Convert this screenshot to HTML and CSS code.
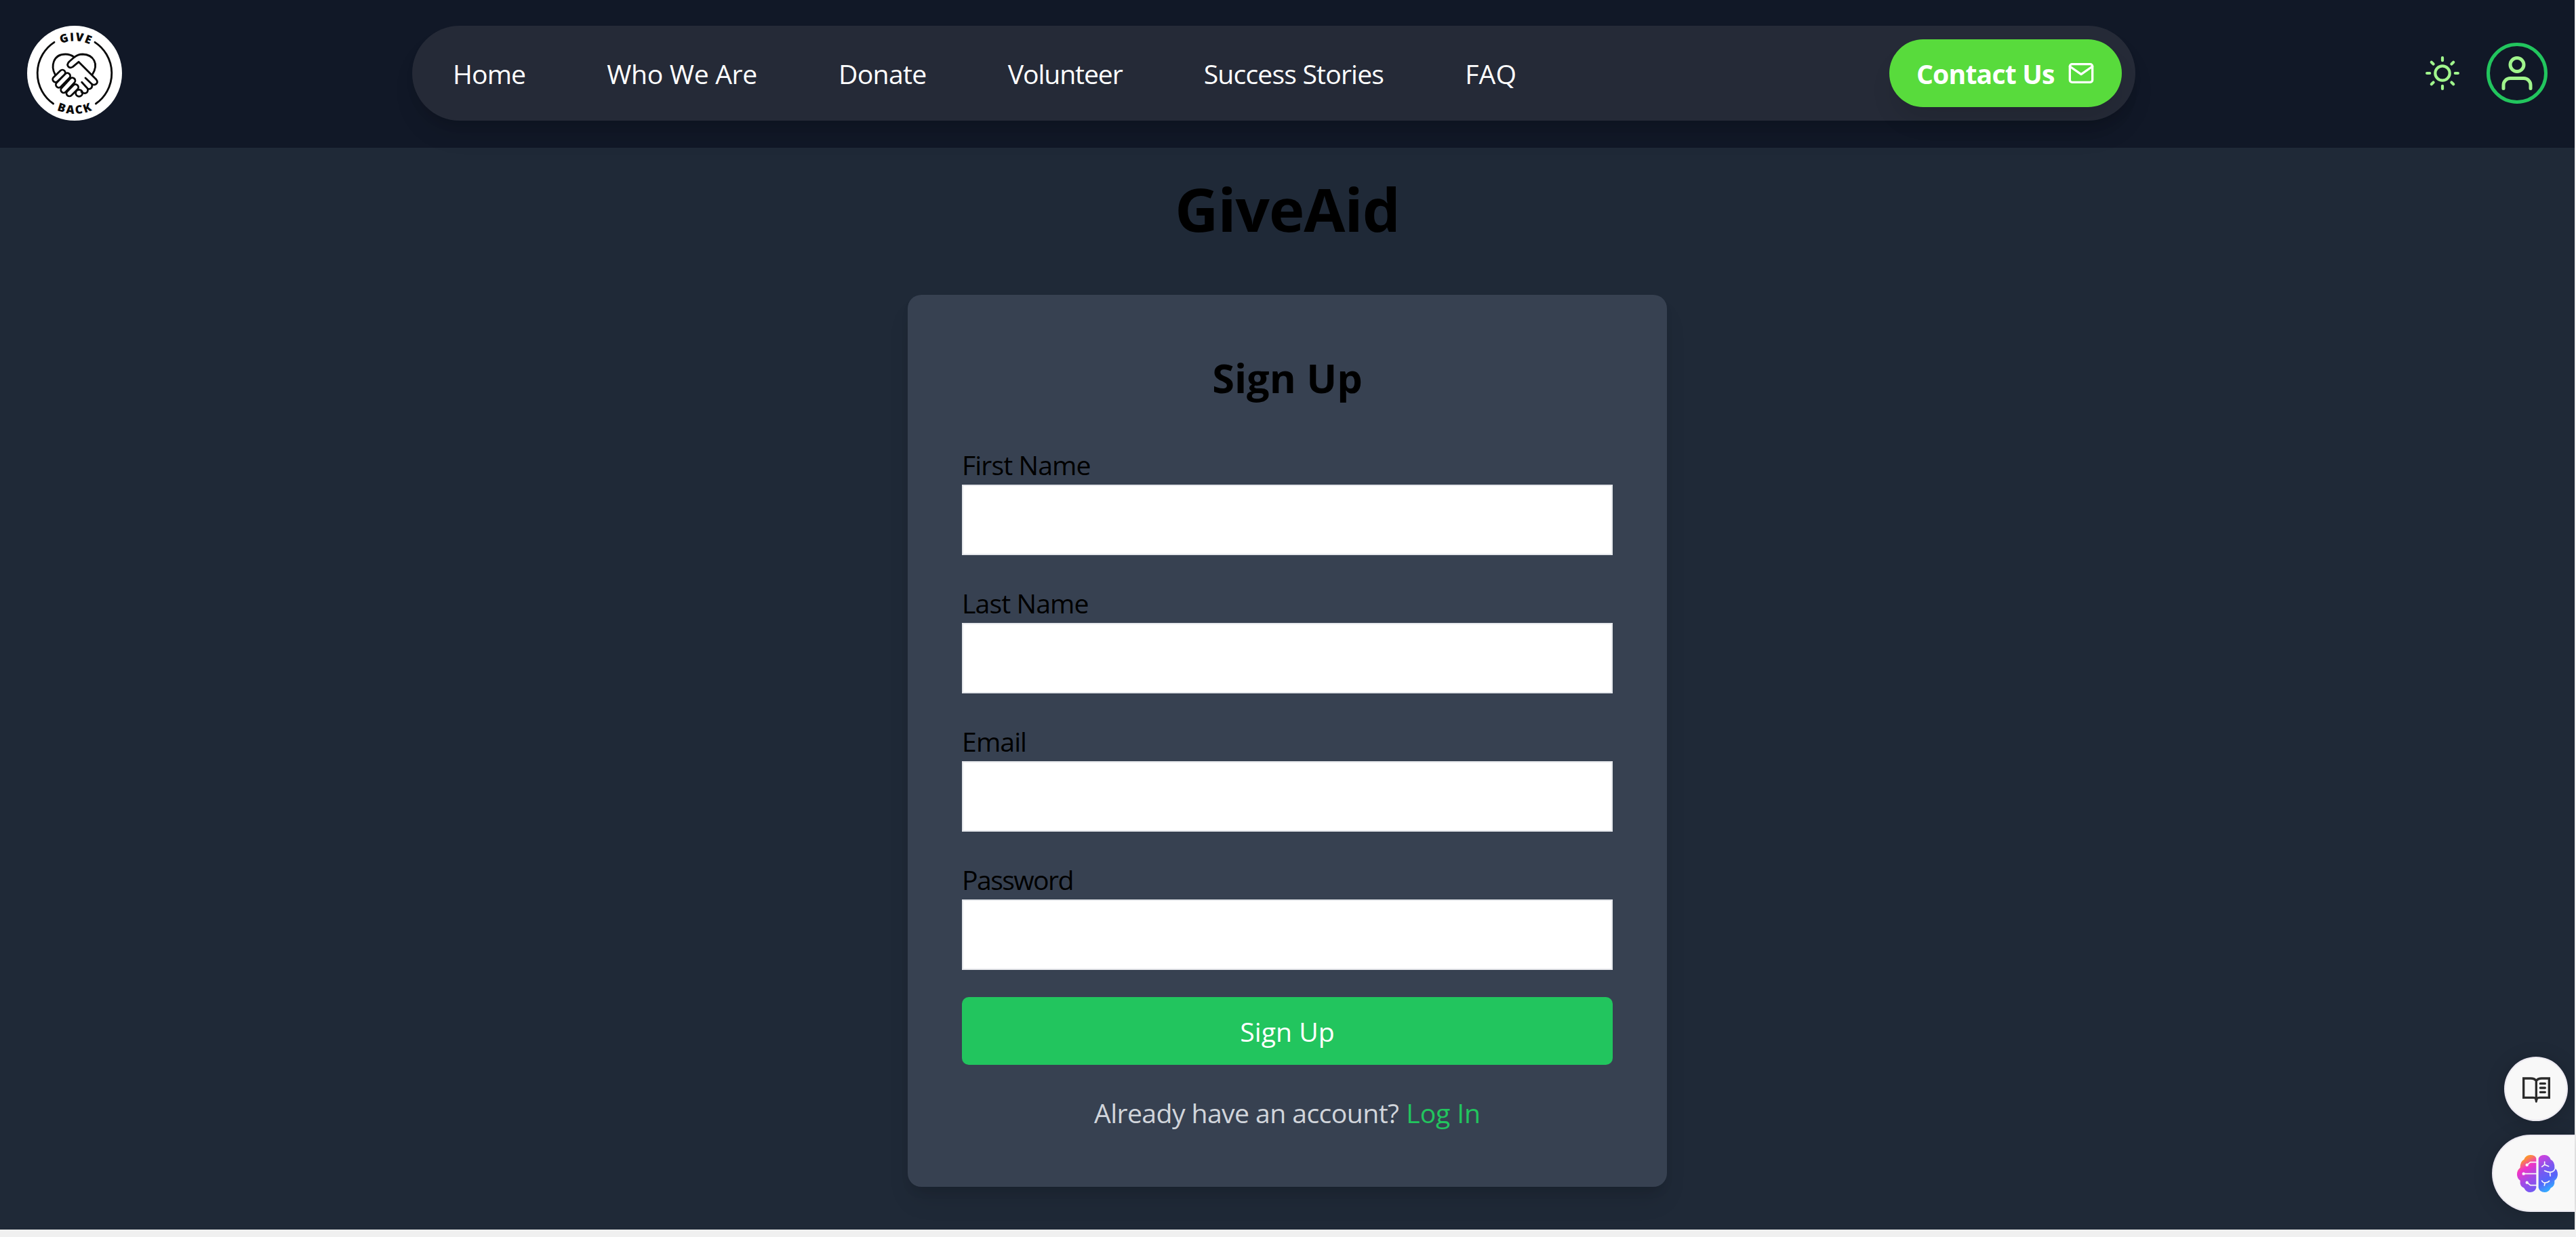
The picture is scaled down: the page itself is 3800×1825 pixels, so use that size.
FILE: index.html
```
<!DOCTYPE html>
<html lang="en">
<head>
<meta charset="utf-8">
<title>GiveAid - Sign Up</title>
<link rel="stylesheet" href="styles.css">
</head>
<body>
<div class="page">
  <header class="header">
    <svg class="logo" viewBox="120 114 420 420" role="img" aria-label="Give Back">
      <defs>
        <path id="arc-top" d="M175 336a155 155 0 0 1 310 0"/>
        <path id="arc-bottom" d="M137 311a193 193 0 0 0 386 0"/>
      </defs>
      <circle cx="330" cy="324" r="210" fill="#fff"/>
      <g fill="none" stroke="#0a0a0a" stroke-width="8.5" stroke-linecap="round" stroke-linejoin="round">
        <path d="M240 187A164 164 0 0 0 236 459M420 187A164 164 0 0 1 424 459"/>
        <g transform="translate(210 210)">
          <path d="M34 120C14 84 24 30 80 30Q102 30 118 43M120 43Q134 30 156 30C205 32 228 74 199 119"/>
          <circle cx="140" cy="202" r="15"/>
          <path d="M152 154l26 28Q182 200 166 203Q156 204 150 196M168 135l29 28Q201 184 180 185M120 42L96 63C80 80 96 96 112 86L138 64L216 142C230 158 208 172 197 162"/>
          <path stroke-width="34" d="M36 141L66 112M50 165L88 126M72 188L110 147M97 203L124 176"/>
          <path stroke="#fff" stroke-width="17" d="M36 141L66 112M50 165L88 126M72 188L110 147M97 203L124 176"/>
        </g>
      </g>
      <text class="logo-text"><textPath href="#arc-top" startOffset="51.2%">GIVE</textPath></text>
      <text class="logo-text logo-text-wide"><textPath href="#arc-bottom" startOffset="50.5%">BACK</textPath></text>
    </svg>
    <nav class="pill">
      <div class="links">
        <a class="home">Home</a>
        <a class="who">Who We Are</a>
        <a class="donate">Donate</a>
        <a class="volunteer">Volunteer</a>
        <a class="stories">Success Stories</a>
        <a class="faq">FAQ</a>
      </div>
      <a class="contact"><span>Contact Us</span>
        <svg width="40" height="40" viewBox="0 0 24 24" fill="none" stroke="currentColor" stroke-width="2" stroke-linecap="round" stroke-linejoin="round"><path d="M4 4h16c1.1 0 2 .9 2 2v12c0 1.1-.9 2-2 2H4c-1.1 0-2-.9-2-2V6c0-1.1.9-2 2-2z"/><path d="M22 6l-10 7L2 6"/></svg>
      </a>
    </nav>
    <div class="tools">
      <svg class="sun" viewBox="-25 -25 50 50" fill="none" stroke="currentColor" stroke-width="4.2" stroke-linecap="round"><circle r="10.7"/><path d="M0-22.9V-18.8M0 22.9V18.8M-22.9 0H-18.8M22.9 0H18.8M-16.2-16.2L-13.4-13.4M16.2 16.2L13.4 13.4M-16.2 16.2L-13.4 13.4M16.2-16.2L13.4-13.4"/></svg>
      <div class="avatar">
        <svg width="60" height="60" viewBox="0 0 24 24" fill="none" stroke="currentColor" stroke-width="2" stroke-linecap="round" stroke-linejoin="round"><path d="M20 21v-2a4 4 0 0 0-4-4H8a4 4 0 0 0-4 4v2"/><circle cx="12" cy="7" r="4"/></svg>
      </div>
    </div>
  </header>
  <main class="main">
    <h1 class="title">GiveAid</h1>
    <form class="card">
      <h2 class="heading">Sign Up</h2>
      <label class="field"><span>First Name</span><input type="text"></label>
      <label class="field"><span>Last Name</span><input type="text"></label>
      <label class="field"><span>Email</span><input type="email"></label>
      <label class="field password"><span>Password</span><input type="password"></label>
      <button class="submit" type="button">Sign Up</button>
      <p class="switch"><span class="question">Already have an account?</span><a class="login">Log In</a></p>
    </form>
  </main>
</div>
<div class="reader">
  <svg width="43" height="40" viewBox="240 177 129 120" fill="none" stroke="#2b2b2b" stroke-width="10" stroke-linecap="round" stroke-linejoin="round"><path stroke-linejoin="miter" d="M304 197Q297 186 280 186H248V271H290Q300 271 304 278Q308 271 320 271H361V186H328Q311 186 304 197V275"/><path d="M322 209H343M322 228H343M322 247H343"/><path fill="#2b2b2b" stroke="none" d="M296 271H313L308 290Q304 297 300 290Z"/></svg>
</div>
<div class="brain">
  <svg width="62" height="57" viewBox="216 516 186 171">
    <defs>
      <linearGradient id="left" gradientUnits="userSpaceOnUse" x1="232" y1="530" x2="320" y2="670"><stop offset="0" stop-color="#ffa61a"/><stop offset=".12" stop-color="#fb8a3c"/><stop offset=".32" stop-color="#f034c8"/><stop offset=".62" stop-color="#a34ae6"/><stop offset="1" stop-color="#6a5cf5"/></linearGradient>
      <linearGradient id="right" gradientUnits="userSpaceOnUse" x1="315" y1="525" x2="395" y2="660"><stop offset="0" stop-color="#d43fdc"/><stop offset=".4" stop-color="#7b57f0"/><stop offset=".7" stop-color="#5566fa"/><stop offset="1" stop-color="#30b4ff"/></linearGradient>
    </defs>
    <path fill="url(#left)" d="M304 534Q300 519 277 519Q258 519 250 539Q233 547 233 575Q219 585 219 605Q219 622 233 632Q230 657 250 665Q260 684 277 684Q299 684 304 664Z"/>
    <path fill="url(#right)" d="M314 534Q320 519 341 519Q360 519 368 539Q386 547 385 575Q399 585 399 605Q399 622 385 632Q387 657 368 665Q359 684 341 684Q319 684 314 664Z"/>
    <g fill="none" stroke="#f8f8f8" stroke-width="5" stroke-linecap="round" stroke-linejoin="round"><path d="M304 551H278L264 562M304 602H249M304 653H278L264 641"/><path d="M341 549V562L329 571M341 562L359 569M341 589Q365 600 378 592Q386 586 388 577M365 597L366 612M329 633Q333 642 342 642Q356 642 362 634M343 642L340 654"/></g>
    <g fill="#f8f8f8"><circle cx="263" cy="563" r="6.5"/><circle cx="248" cy="602" r="6.5"/><circle cx="263" cy="641" r="6.5"/></g>
  </svg>
</div>
</body>
</html>
```

FILE: styles.css
```
* { box-sizing: border-box; }

body {
  margin: 0;
  height: 1825px;
  overflow: hidden;
  background: #f0f0f0;
  font: 400 39.2px/60px "Open Sans", "Noto Sans", sans-serif;
}

.page {
  width: 3798px;
  height: 1814px;
  background: #1f2937;
}

.header {
  display: flex;
  align-items: center;
  justify-content: space-between;
  height: 218px;
  padding: 0 40px 2px;
  background: #111827;
}

.logo { width: 140px; height: 140px; }

.logo-text {
  font: 800 51px "Open Sans", sans-serif;
  letter-spacing: 4px;
  text-anchor: middle;
  fill: #0a0a0a;
}

.logo-text-wide { letter-spacing: 7px; }

.pill {
  position: relative;
  display: flex;
  align-items: center;
  justify-content: space-between;
  width: 2542px;
  height: 140px;
  padding: 0 20px 0 60px;
  border-radius: 70px;
  background: #252a37;
  box-shadow: 0 25px 37px -7px rgba(0, 0, 0, .1), 0 10px 15px -5px rgba(0, 0, 0, .1);
}

.links { display: flex; gap: 120px; color: #fff; }
.links a { height: 60px; line-height: 62px; white-space: nowrap; }
.home { letter-spacing: -.89px; }
.who { letter-spacing: -.34px; }
.donate { letter-spacing: -.68px; }
.volunteer { letter-spacing: -1.1px; }
.stories { letter-spacing: -.85px; }
.faq { letter-spacing: .17px; }

.contact {
  display: flex;
  align-items: center;
  justify-content: space-between;
  width: 343px;
  height: 100px;
  padding: 0 40px;
  border-radius: 50px;
  background: #58db3c;
  box-shadow: 0 25px 37px -7px rgba(0, 0, 0, .1);
  color: #fff;
  font-weight: 700;
  letter-spacing: -.85px;
}

.contact span { padding-top: 2px; }

.tools {
  display: flex;
  align-items: center;
  gap: 40px;
  color: #a0f58c;
}

.sun { width: 50px; height: 50px; }

.avatar {
  display: flex;
  align-items: center;
  justify-content: center;
  width: 90px;
  height: 90px;
  border: 5px solid #22c55e;
  border-radius: 50%;
}

.main {
  display: flex;
  flex-direction: column;
  align-items: center;
  padding-top: 40px;
}

.title {
  margin: 0 0 77px;
  font-size: 88.6px;
  line-height: 100px;
  letter-spacing: -.94px;
  color: #000;
}

.card {
  display: flex;
  flex-direction: column;
  width: 1120px;
  padding: 80px;
  border-radius: 20px;
  background: #374151;
  box-shadow: 0 25px 37px -7px rgba(0, 0, 0, .1), 0 10px 15px -5px rgba(0, 0, 0, .1);
}

.heading {
  height: 80px;
  margin: 0 0 60px;
  font-size: 59.5px;
  line-height: 84px;
  text-align: center;
  color: #000;
}

.field {
  display: flex;
  flex-direction: column;
  margin-bottom: 40px;
  letter-spacing: -.9px;
  color: #000;
}

.password { letter-spacing: -1.6px; }

.field span { height: 60px; line-height: 62px; }

.field input {
  height: 104px;
  border: 2px solid #e5e7eb;
  background: #fff;
}

.submit {
  height: 100px;
  padding: 2px 0 0;
  border: 0;
  border-radius: 10px;
  background: #22c55e;
  color: #fff;
  font: inherit;
}

.switch {
  display: flex;
  justify-content: center;
  gap: 11px;
  height: 60px;
  margin: 40px 0 0;
  line-height: 62px;
  color: #d1d5db;
}

.question { letter-spacing: -.6px; }
.login { color: #22c55e; letter-spacing: -.14px; }

.reader, .brain {
  position: absolute;
  display: flex;
  align-items: center;
  border: 2px solid #ece9f1;
  background: #f8f8f8;
  box-shadow: 0 4px 30px rgba(0, 0, 0, .16);
}

.reader {
  top: 1559px;
  left: 3694px;
  justify-content: center;
  width: 94px;
  height: 95px;
  padding-top: 2px;
  border-radius: 50%;
}

.brain {
  top: 1674px;
  left: 3676px;
  width: 122px;
  height: 114px;
  padding-left: 34px;
  border-right: 0;
  border-radius: 57px 0 0 57px;
}
```
